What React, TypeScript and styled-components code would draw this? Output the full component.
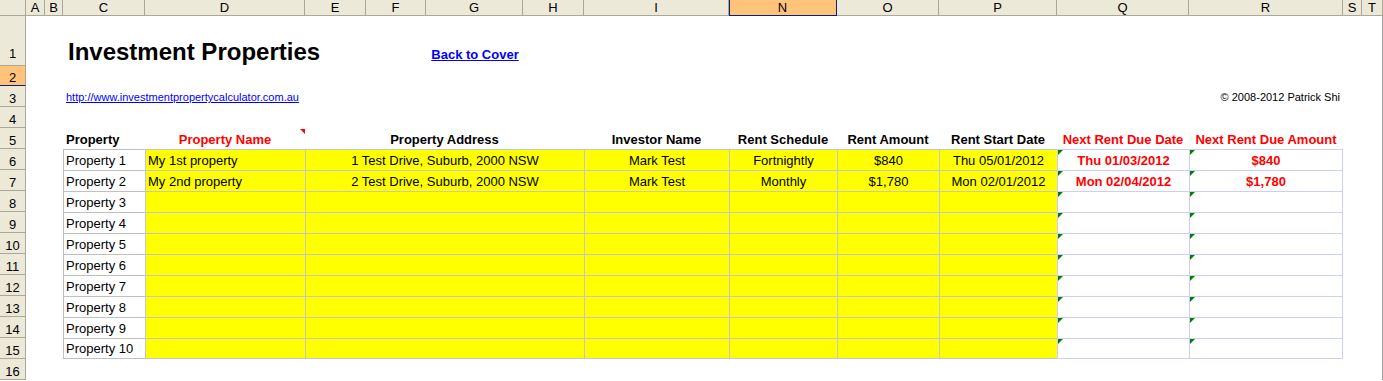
import React from "react";
import styled, { createGlobalStyle, css } from "styled-components";

const HEADER_BG = "#ece9d8";
const HEADER_LINE = "#aca899";
const SEL_BG = "#ffc47a";
const SEL_LINE = "#0a1f7a";
const LABEL_LINE = "#c0c0c0";
const INPUT_LINE = "#c4c4d6";
const CALC_LINE = "#ccccff";

const GlobalStyle = createGlobalStyle`
  html, body { margin: 0; padding: 0; background: #ffffff; }
  body {
    font-family: "Liberation Sans", Arial, sans-serif;
    overflow: hidden;
  }
`;

const COLUMNS: { id: string; w: number }[] = [
  { id: "A", w: 19 },
  { id: "B", w: 18 },
  { id: "C", w: 82 },
  { id: "D", w: 160 },
  { id: "E", w: 61 },
  { id: "F", w: 60 },
  { id: "G", w: 97 },
  { id: "H", w: 61 },
  { id: "I", w: 145 },
  { id: "N", w: 108 },
  { id: "O", w: 102 },
  { id: "P", w: 118 },
  { id: "Q", w: 132 },
  { id: "R", w: 154 },
  { id: "S", w: 19 },
  { id: "T", w: 21 },
];

const ROW_HEIGHTS = [50, 20, ...Array(14).fill(21)];

// grid column index helpers (1 = row headers)
const col = (id: string) => COLUMNS.findIndex((c) => c.id === id) + 2;
const span = (from: string, to: string) => `${col(from)} / ${col(to) + 1}`;

const Sheet = styled.div`
  display: grid;
  grid-template-columns: 26px ${COLUMNS.map((c) => `${c.w}px`).join(" ")};
  grid-template-rows: 16px ${ROW_HEIGHTS.map((h) => `${h}px`).join(" ")};
  width: 1383px;
  background: #ffffff;
  box-shadow: inset -1px 0 0 #a3a3a3;
  font-family: "Liberation Sans", Arial, sans-serif;
  font-size: 13px;
  line-height: 15px;
  color: #000000;
`;

const headerBase = css`
  background: ${HEADER_BG};
  border-right: 1px solid ${HEADER_LINE};
  border-bottom: 1px solid ${HEADER_LINE};
  display: flex;
  align-items: flex-end;
  justify-content: center;
  overflow: hidden;
  white-space: nowrap;
`;

const selectedHeader = css`
  background: ${SEL_BG};
  border-bottom-color: ${SEL_LINE};
`;

const Corner = styled.div`
  ${headerBase};
  grid-column: 1;
  grid-row: 1;
`;

const ColHeader = styled.div<{ $c: number; $sel?: boolean }>`
  ${headerBase};
  grid-row: 1;
  grid-column: ${(p) => p.$c};
  ${(p) =>
    p.$sel &&
    css`
      ${selectedHeader};
      border-right-color: ${SEL_LINE};
      box-shadow: inset 1px 0 0 ${SEL_LINE};
    `}
`;

const RowHeader = styled.div<{ $r: number; $sel?: boolean; $pb: number }>`
  ${headerBase};
  grid-column: 1;
  grid-row: ${(p) => p.$r};
  padding-bottom: ${(p) => p.$pb}px;
  ${(p) => p.$sel && selectedHeader};
`;

type Align = "left" | "center" | "right";
const justify = (a: Align = "left") =>
  a === "center" ? "center" : a === "right" ? "flex-end" : "flex-start";

const Cell = styled.div<{ $c: string | number; $r: number; $align?: Align; $pb?: number }>`
  grid-column: ${(p) => p.$c};
  grid-row: ${(p) => p.$r};
  display: flex;
  align-items: flex-end;
  justify-content: ${(p) => justify(p.$align)};
  padding: 0 3px ${(p) => p.$pb ?? 2}px;
  white-space: nowrap;
  min-width: 0;
  position: relative;
`;

const Title = styled(Cell)`
  font-size: 24px;
  line-height: 28px;
  font-weight: bold;
  padding-left: 5px;
`;

const Hyperlink = styled.a<{ $small?: boolean; $bold?: boolean }>`
  color: #0000ff;
  text-decoration: underline;
  font-weight: ${(p) => (p.$bold ? "bold" : "normal")};
  font-size: ${(p) => (p.$small ? "11px" : "13px")};
  line-height: ${(p) => (p.$small ? "13px" : "15px")};
  cursor: pointer;
`;

const SmallText = styled.span`
  font-size: 11px;
  line-height: 13px;
`;

const HeadCell = styled(Cell)<{ $red?: boolean; $comment?: boolean }>`
  font-weight: bold;
  color: ${(p) => (p.$red ? "#ff0000" : "#000000")};
  ${(p) =>
    p.$comment &&
    css`
      &::after {
        content: "";
        position: absolute;
        top: 1px;
        right: 0;
        border-top: 5px solid #ff0000;
        border-left: 5px solid transparent;
      }
    `}
`;

type Kind = "label" | "input" | "calc";
const lineFor = (k: Kind) => (k === "label" ? LABEL_LINE : k === "input" ? INPUT_LINE : CALC_LINE);

const DataCell = styled.div<{
  $c: string | number;
  $r: number;
  $kind: Kind;
  $align?: Align;
  $last?: boolean;
  $edge?: boolean;
  $flag?: boolean;
}>`
  grid-column: ${(p) => p.$c};
  grid-row: ${(p) => p.$r};
  position: relative;
  display: flex;
  align-items: flex-end;
  justify-content: ${(p) => justify(p.$align)};
  padding: 0 2px 2px;
  min-width: 0;
  white-space: nowrap;
  overflow: hidden;
  background: ${(p) => (p.$kind === "input" ? "#ffff00" : "#ffffff")};
  color: ${(p) => (p.$kind === "calc" ? "#ff0000" : "#000000")};
  font-weight: ${(p) => (p.$kind === "calc" ? "bold" : "normal")};
  border-top: 1px solid ${(p) => lineFor(p.$kind)};
  border-left: 1px solid ${(p) => lineFor(p.$kind)};
  ${(p) => p.$last && css`border-bottom: 1px solid ${lineFor(p.$kind)};`}
  ${(p) => p.$edge && css`border-right: 1px solid ${lineFor(p.$kind)};`}
  ${(p) =>
    p.$flag &&
    css`
      &::before {
        content: "";
        position: absolute;
        top: 0;
        left: 0;
        border-top: 5px solid #008000;
        border-right: 5px solid transparent;
      }
    `}
`;

type Property = {
  label: string;
  name?: string;
  address?: string;
  investor?: string;
  schedule?: string;
  amount?: string;
  start?: string;
  nextDate?: string;
  nextAmount?: string;
};

const PROPERTIES: Property[] = [
  {
    label: "Property 1",
    name: "My 1st property",
    address: "1 Test Drive, Suburb, 2000 NSW",
    investor: "Mark Test",
    schedule: "Fortnightly",
    amount: "$840",
    start: "Thu 05/01/2012",
    nextDate: "Thu 01/03/2012",
    nextAmount: "$840",
  },
  {
    label: "Property 2",
    name: "My 2nd property",
    address: "2 Test Drive, Suburb, 2000 NSW",
    investor: "Mark Test",
    schedule: "Monthly",
    amount: "$1,780",
    start: "Mon 02/01/2012",
    nextDate: "Mon 02/04/2012",
    nextAmount: "$1,780",
  },
  ...Array.from({ length: 8 }, (_, i) => ({ label: `Property ${i + 3}` })),
];

const HEADINGS: { text: string; c: string; align: Align; red?: boolean; comment?: boolean }[] = [
  { text: "Property", c: span("C", "C"), align: "left" },
  { text: "Property Name", c: span("D", "D"), align: "center", red: true, comment: true },
  { text: "Property Address", c: span("E", "H"), align: "center" },
  { text: "Investor Name", c: span("I", "I"), align: "center" },
  { text: "Rent Schedule", c: span("N", "N"), align: "center" },
  { text: "Rent Amount", c: span("O", "O"), align: "center" },
  { text: "Rent Start Date", c: span("P", "P"), align: "center" },
  { text: "Next Rent Due Date", c: span("Q", "Q"), align: "center", red: true },
  { text: "Next Rent Due Amount", c: span("R", "R"), align: "center", red: true },
];

export default function App() {
  const firstDataRow = 7; // grid row of sheet row 6
  return (
    <>
      <GlobalStyle />
      <Sheet>
        <Corner />
        {COLUMNS.map((c, i) => (
          <ColHeader key={c.id} $c={i + 2} $sel={c.id === "N"}>
            {c.id}
          </ColHeader>
        ))}
        {ROW_HEIGHTS.map((_, i) => (
          <RowHeader key={i} $r={i + 2} $sel={i === 1} $pb={i === 0 ? 4 : 0}>
            {i + 1}
          </RowHeader>
        ))}

        <Title $c={span("C", "E")} $r={2} $pb={0}>
          Investment Properties
        </Title>
        <Cell $c={span("F", "H")} $r={2} $align="center" $pb={4}>
          <Hyperlink $bold>Back to Cover</Hyperlink>
        </Cell>

        <Cell $c={span("C", "G")} $r={4} $pb={3}>
          <Hyperlink $small>http://www.investmentpropertycalculator.com.au</Hyperlink>
        </Cell>
        <Cell $c={span("R", "R")} $r={4} $align="right" $pb={3}>
          <SmallText>© 2008-2012 Patrick Shi</SmallText>
        </Cell>

        {HEADINGS.map((h) => (
          <HeadCell key={h.text} $c={h.c} $r={6} $align={h.align} $red={h.red} $comment={h.comment}>
            {h.text}
          </HeadCell>
        ))}

        {PROPERTIES.map((p, i) => {
          const r = firstDataRow + i;
          const last = i === PROPERTIES.length - 1;
          return (
            <React.Fragment key={p.label}>
              <DataCell $c={span("C", "C")} $r={r} $kind="label" $last={last}>
                {p.label}
              </DataCell>
              <DataCell $c={span("D", "D")} $r={r} $kind="input" $last={last}>
                {p.name}
              </DataCell>
              <DataCell $c={span("E", "H")} $r={r} $kind="input" $align="center" $last={last}>
                {p.address}
              </DataCell>
              <DataCell $c={span("I", "I")} $r={r} $kind="input" $align="center" $last={last}>
                {p.investor}
              </DataCell>
              <DataCell $c={span("N", "N")} $r={r} $kind="input" $align="center" $last={last}>
                {p.schedule}
              </DataCell>
              <DataCell $c={span("O", "O")} $r={r} $kind="input" $align="center" $last={last}>
                {p.amount}
              </DataCell>
              <DataCell $c={span("P", "P")} $r={r} $kind="input" $align="center" $last={last}>
                {p.start}
              </DataCell>
              <DataCell $c={span("Q", "Q")} $r={r} $kind="calc" $align="center" $last={last} $flag>
                {p.nextDate}
              </DataCell>
              <DataCell $c={span("R", "R")} $r={r} $kind="calc" $align="center" $last={last} $edge $flag>
                {p.nextAmount}
              </DataCell>
            </React.Fragment>
          );
        })}
      </Sheet>
    </>
  );
}
